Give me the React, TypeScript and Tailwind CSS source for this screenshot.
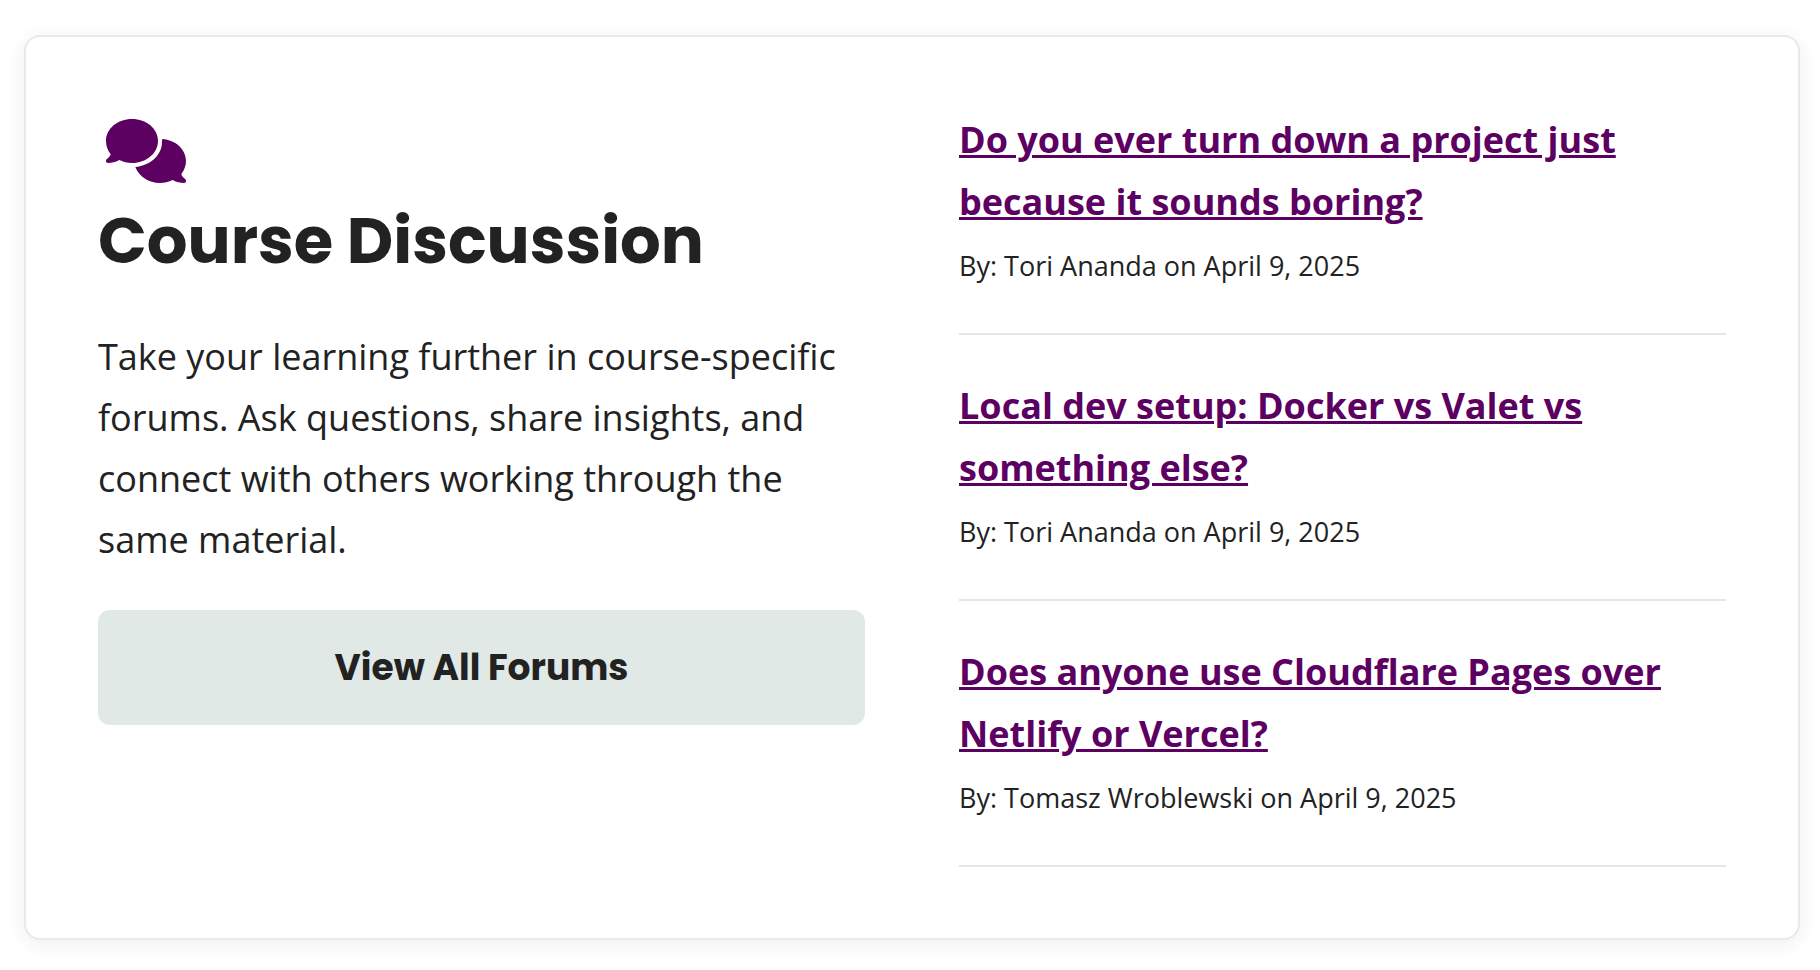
type Topic = { title: string; author: string; date: string };

const topics: Topic[] = [
  { title: "Do you ever turn down a project just because it sounds boring?", author: "Tori Ananda", date: "April 9, 2025" },
  { title: "Local dev setup: Docker vs Valet vs something else?", author: "Tori Ananda", date: "April 9, 2025" },
  { title: "Does anyone use Cloudflare Pages over Netlify or Vercel?", author: "Tomasz Wroblewski", date: "April 9, 2025" },
];

function CommentsIcon() {
  return (
    <svg viewBox="0 0 240 192" className="ml-2 h-16 w-20 fill-[#5c0062]" aria-hidden="true">
      <path d="M78 0C121 0 156 29 156 66S121 132 78 132C65 132 52 129 40 123C28 130 17 132 6 132C0 132-2 125 2 121C8 116 13 111 14 106C5 94 0 80 0 66C0 29 35 0 78 0Z" />
      <path d="M169 60C209 63 240 91 240 126C240 140 235 153 226 165C227 171 232 176 238 181C242 185 240 192 234 192C223 192 212 190 200 183C188 189 175 192 162 192C128 192 99 173 88 144C133 139 168 109 168 68C168 65 168 63 169 60Z" />
    </svg>
  );
}

function TopicItem({ title, author, date }: Topic) {
  return (
    <li className="border-b-2 border-[#e0e8e6] pb-[42px]">
      <h3 className="text-[36px] leading-[62px] font-bold">
        <a href="#topic" className="text-[#5c0062] underline decoration-[3px] underline-offset-2">
          {title}
        </a>
      </h3>
      <p className="mt-2 text-[27px] leading-[50px]">
        By: {author} on {date}
      </p>
    </li>
  );
}

export default function App() {
  return (
    <main className="bg-white pt-[35px] pr-5 pb-8 pl-6 font-['Open_Sans',sans-serif] text-[#222222]">
      <section className="grid grid-cols-2 gap-[94px] rounded-[16px] border-2 border-[#e8eaea] bg-white px-[72px] pt-[72px] pb-[71px] shadow-[0_4px_20px_rgba(0,0,0,0.07)]">
        <div className="pt-[10px]">
          <CommentsIcon />
          <h2 className="mt-4 font-['Poppins','Inter',sans-serif] text-[64px] leading-[84px] font-bold">Course Discussion</h2>
          <p className="mt-[43px] text-[36px] leading-[61px]">
            Take your learning further in course-specific forums. Ask questions, share insights, and connect with others working through the same material.
          </p>
          <button type="button" className="mt-10 w-full rounded-[12px] bg-[#e0e9e6] py-7 font-['Poppins','Inter',sans-serif] text-[36px] leading-[59px] font-bold">
            View All Forums
          </button>
        </div>
        <ul className="flex flex-col gap-10">
          {topics.map((topic) => (
            <TopicItem key={topic.title} {...topic} />
          ))}
        </ul>
      </section>
    </main>
  );
}
